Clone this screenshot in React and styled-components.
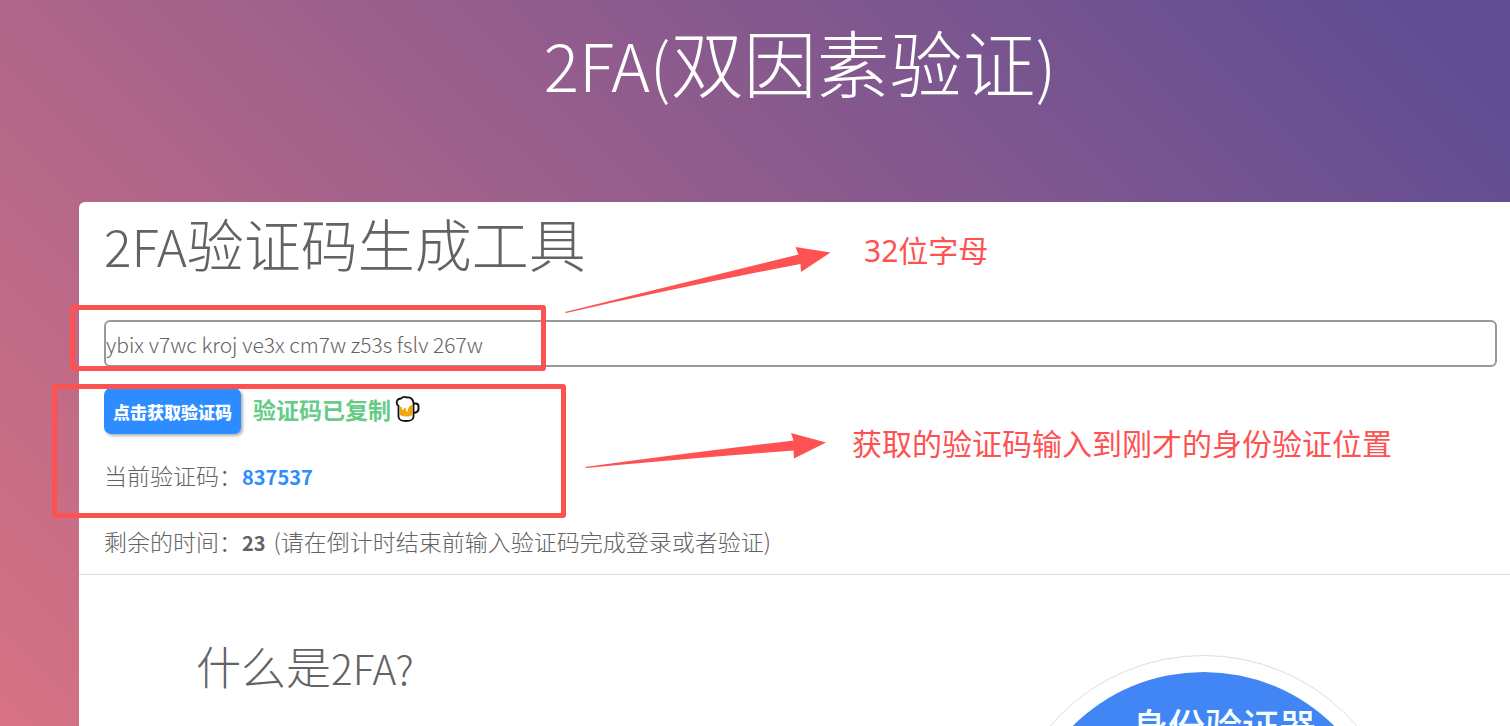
import { useState } from "react";
import styled, { createGlobalStyle } from "styled-components";

function App() {
  const [secret, setSecret] = useState("ybix v7wc kroj ve3x cm7w z53s fslv 267w");

  return (
    <Page>
      <GlobalStyle />
      <Wrapper>
        <Header>
          <Title>
            <Latin>2FA(</Latin>双因素验证<Latin>)</Latin>
          </Title>
        </Header>
        <Main>
          <Tool>
            <ToolTitle id="tool-title">
              <Latin>2FA</Latin>验证码生成工具
            </ToolTitle>
            <SecretInput
              type="text"
              aria-labelledby="tool-title"
              value={secret}
              onChange={(ev) => setSecret(ev.target.value)}
            />
            <Actions>
              <GetButton type="button">点击获取验证码</GetButton>
              <Copied>
                验证码已复制
                <Beer />
              </Copied>
            </Actions>
            <Line>
              当前验证码：<Code>837537</Code>
            </Line>
            <Line>
              剩余的时间：<Seconds>23</Seconds>
              <Hint>(请在倒计时结束前输入验证码完成登录或者验证)</Hint>
            </Line>
          </Tool>
          <About>
            <AboutTitle>
              什么是<Latin>2FA?</Latin>
            </AboutTitle>
            <Badge>
              <BadgeInner>身份验证器</BadgeInner>
            </Badge>
          </About>
        </Main>
      </Wrapper>
      <Marks>
        <Frame $x={70} $y={305} $w={476} $h={66} />
        <Frame $x={52} $y={384} $w={514} $h={134} />
        <Arrow $x={560} $y={240} width="280" height="80" viewBox="0 0 280 80">
          <path d="M5 72 L238.500 14.500 L235.500 7 L270.500 12.500 L241 32 L240.500 24 Q120 47 6 73 Z" />
        </Arrow>
        <Arrow $x={580} $y={425} width="250" height="50" viewBox="0 0 250 50">
          <path d="M5 42 Q100 29 213.500 15.500 L211 8 L246 17.500 L214 33.500 L213.500 25.500 Q100 34 6 43 Z" />
        </Arrow>
        <Note $x={864} $y={230}>32位字母</Note>
        <Note $x={852} $y={423}>获取的验证码输入到刚才的身份验证位置</Note>
      </Marks>
    </Page>
  );
}
export default App;

function Beer() {
  return (
    <BeerIcon viewBox="0 0 25 28" aria-hidden="true">
      <path d="M18 8.500 H20.500 Q23.500 8.500 23.500 11.500 V14 Q23.500 17.500 18 18" fill="#fff" stroke="#111" strokeWidth="2" />
      <path
        d="M3.500 11 Q1 9 2 6 Q3 3.500 6 3.500 Q8.500 1 12 2.500 Q16 2 17.500 5 Q18.500 6 18.500 9 V22 Q18 26 11 26 Q4 26 3.500 22 Z"
        fill="#fff"
        stroke="#111"
        strokeWidth="1.800"
        strokeLinejoin="round"
      />
      <path d="M5 12 Q7 11 7 14 Q8 16 9 13.500 Q10 12 11 14 V16 Q12.500 18 13 15 Q13 11 17.500 9.500 V20 Q11 23 5 20 Z" fill="#f2a50c" />
    </BeerIcon>
  );
}

const GlobalStyle = createGlobalStyle`
  * { box-sizing: border-box; }
  body {
    margin: 0;
    color: #636363;
    font-family: "Noto Sans CJK SC", sans-serif;
    font-weight: 300;
    font-size: 23px;
  }
  input, button { font: inherit; }
`;

const Page = styled.div`
  position: relative;
  height: 100vh;
  overflow: hidden;
`;

/* the page is wider than the window, its right edge runs out of view */
const Wrapper = styled.div`
  width: calc(100% + 90px);
  min-height: 100%;
  background: linear-gradient(45deg, #e37682 7%, #5f4d93 93%);
`;

const Header = styled.header`
  height: 202px;
  padding-top: 6px;
  text-align: center;
`;

const Title = styled.h1`
  margin: 0;
  color: #fff;
  font-size: 73px;
  font-weight: 300;
  line-height: 108px;
`;

const Latin = styled.span`
  font-size: 0.9em;
  line-height: 1;
`;

const Main = styled.main`
  margin: 0 79px;
  background: #fff;
  border-radius: 6px;
`;

const Tool = styled.section`
  padding: 0 24px 6px 25px;
  border-bottom: 1px solid #ddd;
`;

const ToolTitle = styled.h2`
  margin: 0 0 38px;
  font-size: 57px;
  font-weight: 300;
  line-height: 80px;
`;

const SecretInput = styled.input`
  display: block;
  width: 100%;
  height: 47px;
  padding: 0;
  border: 2px solid #999;
  border-radius: 6px;
  background: #fff;
  color: inherit;
  font-size: 21px;
`;

const Actions = styled.div`
  display: flex;
  align-items: flex-start;
  gap: 12px;
  margin: 21px 0 2px;
`;

const GetButton = styled.button`
  height: 46px;
  padding: 0 9px;
  border: 0;
  border-radius: 7px;
  background: #2d8cff;
  box-shadow: 2px 2px 3px rgba(0, 0, 0, 0.3);
  color: #fff;
  font-size: 17px;
  font-weight: 900;
  white-space: nowrap;
`;

const Copied = styled.strong`
  display: flex;
  align-items: center;
  gap: 4px;
  color: #6c8;
  font-weight: 700;
  line-height: 42px;
`;

const BeerIcon = styled.svg`
  width: 25px;
  height: 28px;
`;

const Line = styled.p`
  margin: 0;
  padding: 22px 0 8px;
  line-height: 34px;
`;

const Code = styled.b`
  color: #2d8cff;
  font-size: 20px;
  font-weight: 700;
`;

const Seconds = styled.b`
  font-size: 20px;
  font-weight: 700;
`;

const Hint = styled.span`
  margin-left: 8px;
`;

const About = styled.section`
  display: flex;
  justify-content: space-between;
  padding: 62px 115px;
`;

const AboutTitle = styled.h2`
  margin: 0;
  padding: 0 2px;
  font-size: 45px;
  font-weight: 300;
  line-height: 58px;
`;

const Badge = styled.div`
  width: 405px;
  height: 405px;
  margin-top: 18px;
  padding: 16px;
  border: 1px solid #ddd;
  border-radius: 50%;
`;

const BadgeInner = styled.div`
  height: 100%;
  padding: 26px 0 0 40px;
  border-radius: 50%;
  background: #4285f4;
  color: #f4ffff;
  font-size: 37px;
  font-weight: 500;
  text-align: center;
`;

const Marks = styled.div`
  position: absolute;
  inset: 0;
  color: #fe5252;
  pointer-events: none;
`;

const Frame = styled.div`
  position: absolute;
  left: ${(p) => p.$x}px;
  top: ${(p) => p.$y}px;
  width: ${(p) => p.$w}px;
  height: ${(p) => p.$h}px;
  border: 5px solid;
  border-radius: 3px;
`;

const Arrow = styled.svg`
  position: absolute;
  left: ${(p) => p.$x}px;
  top: ${(p) => p.$y}px;
  fill: currentColor;
`;

const Note = styled.span`
  position: absolute;
  left: ${(p) => p.$x}px;
  top: ${(p) => p.$y}px;
  font-family: "Noto Sans", "Noto Sans CJK SC", sans-serif;
  font-size: 30px;
  font-weight: 400;
  line-height: 42px;
  white-space: nowrap;
`;
